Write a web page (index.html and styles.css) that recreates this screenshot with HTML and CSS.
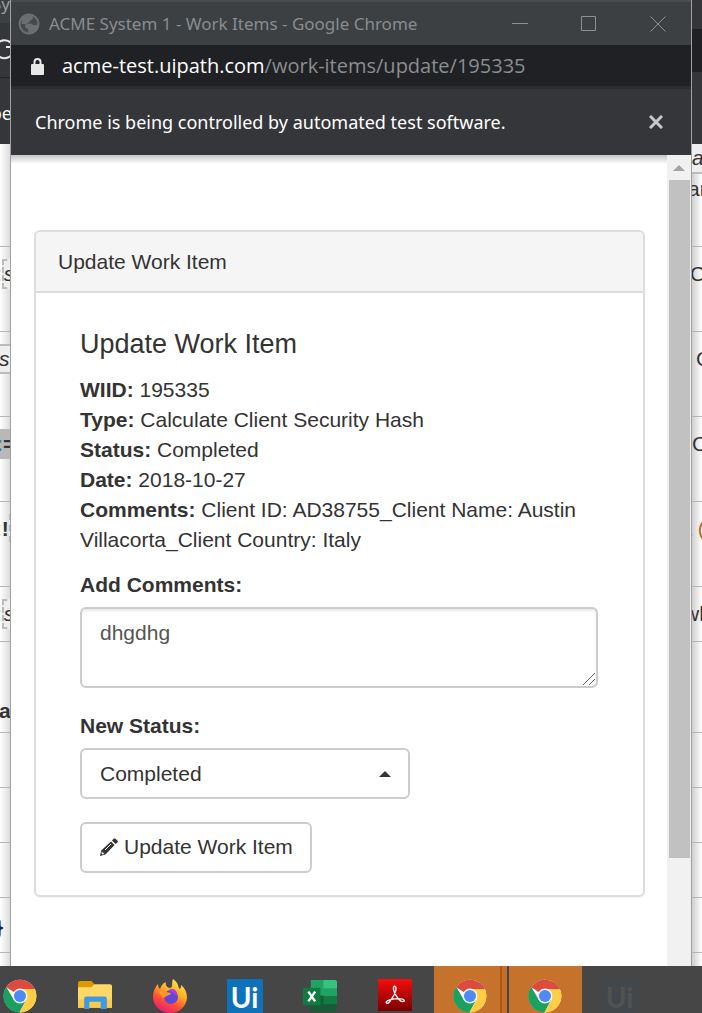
FILE: index.html
```html
<!DOCTYPE html>
<html lang="en">
<head>
<meta charset="utf-8">
<meta name="viewport" content="width=device-width, initial-scale=1">
<title>ACME System 1 - Work Items</title>
<link rel="stylesheet" href="styles.css">
</head>
<body>
<svg class="defs" aria-hidden="true">
  <symbol id="chrome" viewBox="0 0 48 48">
    <circle cx="24" cy="24" r="23" fill="#fff"/>
    <path d="M24 24 4.500 11.500A23.500 23.500 0 0 1 45 14H24z" fill="#dc4b3f"/>
    <path d="M4.500 11A23.500 23.500 0 0 0 23 47.500L33 29 24 33 15 29z" fill="#1aa15f"/>
    <path d="M45 14A23.500 23.500 0 0 1 23 47.500L33.500 29 33 18 24 14z" fill="#ffce44"/>
    <circle cx="24" cy="24" r="10.500" fill="#f1f1f1"/>
    <circle cx="24" cy="24" r="8.500" fill="#4c8bf5"/>
  </symbol>
</svg>
<div class="desktop">
  <aside class="behind behind-left">
    <div class="back-title">Sy</div>
    <div class="back-tools"><svg width="22" height="22" viewBox="0 0 22 22" fill="none" stroke="#e8eaed" stroke-width="2"><path d="M17 4a9 9 0 1 0 2 9M12 8h7V2"/></svg></div>
    <div class="back-info">be</div>
    <div class="row first"></div>
    <div class="row"><span class="dots">:</span><i class="tag">s</i></div>
    <div class="row"><i class="tag flat">s</i></div>
    <div class="row"><span class="mark"><span class="dots">:</span>=</span></div>
    <div class="row"><span class="dots">:</span><b>!</b><i class="tag edge"></i></div>
    <div class="row short"><span class="dots">:</span><i class="tag">s</i></div>
    <div class="row tall"><b class="letter">a</b></div>
    <div class="row small"></div>
    <div class="row small"></div>
    <div class="row small"></div>
    <div class="row small"><b class="brace">}</b></div>
  </aside>
  <main class="window">
    <header class="titlebar">
      <svg class="globe" viewBox="0 0 22 22"><circle cx="11" cy="11" r="9.500" fill="#45494c" stroke="#6b6f72" stroke-width="2"/><path d="M10 2c4 0 5 1 5 3s-2 1-3 3-2 1-3 3H4c-2-5 1-8 6-9zM10 11c3-1 4 0 5 1 2 1 3-1 5 0-1 5-5 8-9 8-2-1 0-3-1-4s-3-1-3-3 1-2 3-2z" fill="#6b6f72"/></svg>
      <span class="title">ACME System 1 - Work Items - Google Chrome</span>
      <div class="controls">
        <button aria-label="Minimize"><svg viewBox="0 0 16 16"><path d="M0 7.500h16"/></svg></button>
        <button aria-label="Maximize"><svg viewBox="0 0 16 16"><path d="M.5.5h14v14H.5z"/></svg></button>
        <button aria-label="Close"><svg viewBox="0 0 16 16"><path d="M.5.500l15 15M15.500.500l-15 15"/></svg></button>
      </div>
    </header>
    <div class="address">
      <svg class="lock" viewBox="0 0 13 17"><path d="M3.500 7V4a3 3 0 0 1 6 0v3" fill="none" stroke="#e8e8e8" stroke-width="2"/><rect y="6" width="13" height="11" rx="1" fill="#e8e8e8"/></svg>
      <span class="url"><span class="host">acme-test.uipath.com</span>/work-items/update/195335</span>
    </div>
    <div class="infobar">
      <span>Chrome is being controlled by automated test software.</span>
      <button aria-label="Dismiss"><svg viewBox="0 0 14 14"><path d="M1 1l12 12M13 1 1 13"/></svg></button>
    </div>
    <div class="viewport">
      <div class="page">
        <form class="panel">
          <div class="panel-heading">Update Work Item</div>
          <div class="panel-body">
            <h4>Update Work Item</h4>
            <p><b>WIID:</b> 195335<br><b>Type:</b> Calculate Client Security Hash<br><b>Status:</b> Completed<br><b>Date:</b> 2018-10-27<br><b>Comments:</b> Client ID: AD38755_Client Name: Austin Villacorta_Client Country: Italy</p>
            <label for="comments">Add Comments:</label>
            <div class="area">
              <textarea id="comments">dhgdhg</textarea>
              <svg class="grip" viewBox="0 0 12 12"><path d="M0 12 12 0M6 12l6-6"/></svg>
            </div>
            <label for="status">New Status:</label>
            <div class="select">
              <select id="status"><option>Completed</option></select>
              <svg class="caret" viewBox="0 0 12 6"><path d="M0 6 6 0l6 6z"/></svg>
            </div>
            <button class="submit" type="button"><svg viewBox="0 0 18 18"><path d="M12 2.500 13.500.8q1-.8 2 0l1.800 1.700q1 1 0 2L15.500 6zM11 3.500 14.500 7 5.500 16.500 0 18l1.200-5.500z"/><path d="M1.800 13.500 4.500 16l-2 .6-1-1z" fill="#fff"/><path d="M11 6 5 12" stroke="#fff" stroke-width="1"/></svg>Update Work Item</button>
          </div>
        </form>
      </div>
      <div class="scrollbar"><svg viewBox="0 0 12 6"><path d="M0 6 6 0l6 6z"/></svg><div class="thumb"></div></div>
    </div>
  </main>
  <aside class="behind behind-right">
    <div class="back-title"></div>
    <div class="back-url"></div>
    <div class="back-info"></div>
    <div class="row first top"><i class="tag">a</i><span>ar</span></div>
    <div class="row"><span class="near">C</span></div>
    <div class="row"><span class="in">C</span></div>
    <div class="row"><span>C</span></div>
    <div class="row"><span class="stop">.</span><span class="link">(</span></div>
    <div class="row short"><span class="wide">wh</span></div>
    <div class="row tall"></div>
    <div class="row small"></div>
    <div class="row small"></div>
    <div class="row small"></div>
    <div class="row small"></div>
  </aside>
</div>
<nav class="taskbar" aria-label="Taskbar">
  <div class="task first"><svg viewBox="0 0 48 48"><use href="#chrome"/></svg></div>
  <div class="task"><svg viewBox="0 0 33 33"><path d="M0 4q0-2 2-2h11l3 3v5H0z" fill="#d99b00"/><path d="M0 8h13l3-3h15q2 0 2 2v21H0z" fill="#ffd866"/><path d="M0 20h33v8H0z" fill="#f9ca50"/><path d="M6 29V19q0-2 2-2h18q2 0 2 2v10h-6v-7H11v7z" fill="#3d9ae3"/></svg></div>
  <div class="task"><svg viewBox="0 0 34 34">
    <defs><linearGradient id="fox" x1="0.800" y1="0" x2="0.300" y2="1"><stop offset="0" stop-color="#fff04a"/><stop offset=".4" stop-color="#ffad24"/><stop offset=".7" stop-color="#ff4b39"/><stop offset="1" stop-color="#e7187e"/></linearGradient></defs>
    <path d="M20 0c7 5 4 8 7 10 1-1 1-3 1-4 5 4 6 9 6 13-1 9-8 15-17 15S0 27 0 18C0 12 3 7 5 5c0 3 1 4 2 5 1-3 3-6 6-7-1 3 1 5 3 6 5 0 2-5 4-9z" fill="url(#fox)"/>
    <circle cx="18" cy="18" r="7" fill="#6247d7"/><path d="M16 11c3-3 9 0 8 6-2-3-5-3-8-6z" fill="#b13de0"/><path d="M6 13c4-3 6 0 12 1-1 3-5 2-7 5-3-1-4-3-5-6z" fill="#ff9428"/></svg></div>
  <div class="task"><span class="uipath">Ui</span></div>
  <div class="task"><svg class="excel" viewBox="0 0 35 33"><path fill="#21a366" d="M8 0h14v16H8z"/><path fill="#33c481" d="M21 0h12q2 0 2 2v7H21z"/><path fill="#21a366" d="M21 9h14v8H21z"/><path fill="#107c41" d="M8 17h27v8H8z"/><path fill="#185c37" d="M8 25h27v6q0 2-2 2H8z"/><path fill="#185c37" d="M8 17h13v8H8z"/><rect y="8" width="18" height="18" rx="1" fill="#107c41"/><path d="m5.500 12 7 10m0-10-7 10" stroke="#fff" stroke-width="2.500"/></svg></div>
  <div class="task"><svg viewBox="0 0 33 33"><defs><linearGradient id="pdf" x2="0" y2="1"><stop stop-color="#f50d0d"/><stop offset="1" stop-color="#780000"/></linearGradient></defs><path fill="url(#pdf)" d="M0 0h33v31H0z"/><path d="M16 7c3 0 1 7-2 11-2 4-5 7-6 5s6-4 12-4 7 3 4 3-8-7-9-12c0-2 0-3 1-3z" fill="none" stroke="#fff" stroke-width="1.300"/></svg></div>
  <div class="task active"><svg viewBox="0 0 48 48"><use href="#chrome"/></svg></div>
  <div class="task active solo"><svg viewBox="0 0 48 48"><use href="#chrome"/></svg></div>
  <div class="task"><span class="uipath ghost">Ui</span></div>
</nav>
</body>
</html>
```
FILE: styles.css
```css
* { box-sizing: border-box; }
body {
  margin: 0;
  min-height: 100vh;
  display: flex;
  flex-direction: column;
  overflow: hidden;
  background: #fff;
  color: #333;
  font: 21px/30px "Liberation Sans", Arial, sans-serif;
}
button { font: inherit; color: inherit; background: none; border: 0; padding: 0; }
svg { display: block; flex: none; }
.defs { width: 0; height: 0; position: absolute; }
.desktop { flex: 1; display: grid; grid-template-columns: 11px minmax(0, 1fr) 11px; }

.behind { overflow: hidden; white-space: nowrap; display: flex; flex-direction: column; }
.behind-left { background: linear-gradient(90deg, #fff, #dcdcdc); border-right: 1px solid #a0a0a0; }
.behind-right { background: linear-gradient(270deg, #fff, #cfcfcf); border-left: 1px solid #a0a0a0; }
.back-title, .back-tools, .back-url, .back-info { flex: none; background: #35363a; }
.back-title { height: 23px; background: #3c4043; color: #9a9da0; font: 17px/8px "Noto Sans", sans-serif; }
.behind-left .back-title { display: flex; justify-content: flex-end; }
.back-tools { height: 55px; padding-top: 16px; border-bottom: 1px solid #242528; }
.back-tools svg { margin-left: -6px; }
.back-info { height: 66px; color: #fff; font: 18px/70px "Noto Sans", sans-serif; }
.behind-left .back-info { display: flex; justify-content: flex-end; margin-right: -2px; }
.behind-right .back-title { height: 29px; background: #35363a; }
.back-url { height: 49px; background: #202124; border-bottom: 6px solid #35363a; }
.row { flex: none; height: 85px; border-bottom: 1px solid #b5b5b5; display: flex; align-items: flex-start; padding-top: 12px; }
.row.first { height: 103px; }
.row.top { flex-direction: column; padding-top: 0; }
.row.short { height: 55px; }
.row.tall { height: 91px; padding-top: 54px; }
.row.small { height: 55px; padding-top: 14px; }
.dots { color: #2587d0; margin-left: -4px; }
.tag { border: 2px dashed #bbb; background: #eee; line-height: 26px; flex: none; }
.top .tag { border-width: 0 0 2px; line-height: 28px; }
.top span { margin-left: -4px; }
.tag.flat { border-width: 2px 0; margin-left: -1px; }
.tag.edge { height: 28px; width: 6px; }
.mark { background: #b8b8b8; font-weight: bold; flex: none; }
.letter { margin-left: -1px; }
.brace { color: #222057; margin-left: -5px; }
.near { margin-left: -2px; }
.behind-right .row > span { flex: none; }
.in { margin-left: 4px; }
.stop { color: #2587d0; margin-left: -4px; }
.link { color: #b66a18; margin-left: 4px; }
.wide { margin-left: -8px; }

.window { display: flex; flex-direction: column; min-width: 0; }
.titlebar, .address, .infobar { display: flex; align-items: center; font-family: "Noto Sans", "Open Sans", sans-serif; }
.titlebar { height: 45px; background: #3c4043; border-top: 2px solid #484c4f; color: #8a8c8e; font-size: 17px; padding-left: 7px; }
.globe { width: 22px; height: 22px; margin-right: 9px; }
.title { flex: 1; white-space: nowrap; }
.controls { display: flex; gap: 53px; padding-right: 25px; }
.controls svg { width: 16px; height: 16px; fill: none; stroke: #8e9092; }
.address { height: 44px; background: #202124; border-bottom: 3px solid #2b2c2f; color: #8b8d90; font-family: "Open Sans", sans-serif; font-size: 20px; padding: 1px 20px 0; }
.lock { width: 13px; height: 17px; margin-right: 18px; }
.host { color: #fff; }
.infobar { height: 66px; background: #35363a; color: #fff; font-size: 18px; padding: 0 28px 0 24px; justify-content: space-between; }
.infobar svg { width: 14px; height: 14px; fill: none; stroke: #c8c9ca; stroke-width: 3; }

.viewport { flex: 1; display: flex; background: linear-gradient(#c4c4c4, #fff 9px); }
.page { flex: 1; min-width: 0; padding: 75px 22px 0 23px; }
.panel { border: 2px solid #ddd; border-radius: 6px; background: #fff; box-shadow: 0 1px 2px #0000000d; }
.panel-heading { padding: 15px 22px 14px; border-bottom: 2px solid #ddd; background: #f5f5f5; border-radius: 4px 4px 0 0; }
.panel-body { padding: 36px 45px 22px 44px; }
h4 { margin: 0 0 16px; font-size: 27px; line-height: 30px; font-weight: normal; }
p { margin: 0 0 15px; }
label { display: block; font-weight: bold; margin-bottom: 7px; }
textarea, select, .submit { font: inherit; background: #fff; border: 2px solid #ccc; border-radius: 6px; }
.area { position: relative; margin-bottom: 23px; }
textarea { display: block; width: 100%; height: 81px; padding: 9px 18px; color: #555; resize: none; box-shadow: inset 0 2px 2px #00000013; }
.grip { position: absolute; right: 3px; bottom: 3px; width: 12px; height: 12px; fill: none; stroke: #666; pointer-events: none; }
.select { position: relative; width: 330px; max-width: 100%; margin-bottom: 23px; }
select { appearance: none; display: block; width: 100%; height: 51px; padding: 0 18px; color: #333; }
.caret { position: absolute; right: 19px; top: 23px; width: 12px; height: 6px; fill: #333; pointer-events: none; }
.submit { display: flex; align-items: center; gap: 6px; height: 51px; padding: 0 17px 2px 18px; }
.submit svg { width: 18px; height: 18px; fill: #333; }
.scrollbar { width: 24px; padding-top: 10px; background: #f1f1f1; display: flex; flex-direction: column; align-items: center; }
.scrollbar svg { width: 12px; height: 6px; fill: #a3a3a3; margin-bottom: 9px; }
.thumb { width: 21px; height: 678px; background: #c1c1c1; }

.taskbar { height: 47px; flex: none; background: #464646; display: flex; overflow: hidden; }
.task { width: 75px; flex: none; display: flex; justify-content: center; padding-top: 13px; }
.task svg { width: 34px; height: 34px; }
.task.first { width: 57px; padding-right: 18px; }
.task.active { width: 73px; margin-left: 2px; padding-right: 2px; background: linear-gradient(90deg, #c5722d 66px, #a85715 66px 68px, #c46e29 68px); }
.task.solo { background: #c5722d; }
.uipath { width: 36px; height: 36px; background: #0d72b9; color: #fff; font: bold 28px/36px Lato, sans-serif; text-align: center; }
.ghost { background: #42474b; color: #525252; }
```
